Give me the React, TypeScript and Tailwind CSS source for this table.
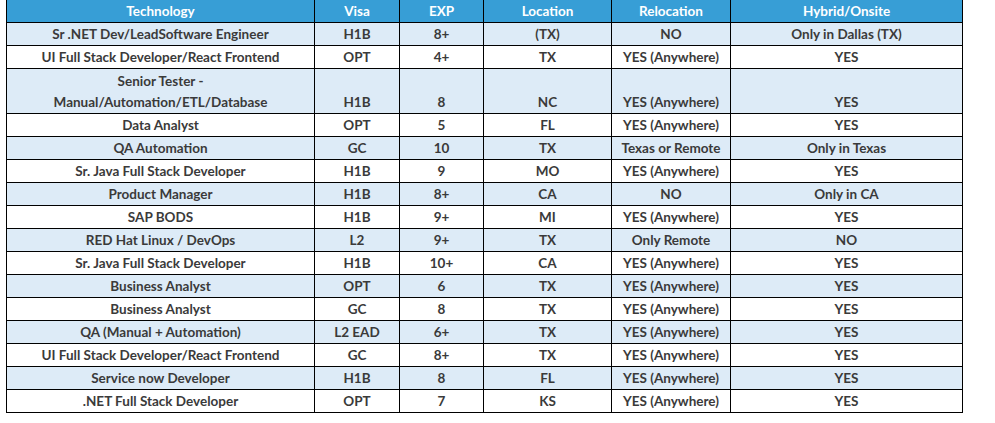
const rows: [string, string, string, string, string, string][] = [
  ["Sr .NET Dev/LeadSoftware Engineer", "H1B", "8+", "(TX)", "NO", "Only in Dallas (TX)"],
  ["UI Full Stack Developer/React Frontend", "OPT", "4+", "TX", "YES (Anywhere)", "YES"],
  ["Senior Tester -\nManual/Automation/ETL/Database", "H1B", "8", "NC", "YES (Anywhere)", "YES"],
  ["Data Analyst", "OPT", "5", "FL", "YES (Anywhere)", "YES"],
  ["QA Automation", "GC", "10", "TX", "Texas or Remote", "Only in Texas"],
  ["Sr. Java Full Stack Developer", "H1B", "9", "MO", "YES (Anywhere)", "YES"],
  ["Product Manager", "H1B", "8+", "CA", "NO", "Only in CA"],
  ["SAP BODS", "H1B", "9+", "MI", "YES (Anywhere)", "YES"],
  ["RED Hat Linux / DevOps", "L2", "9+", "TX", "Only Remote", "NO"],
  ["Sr. Java Full Stack Developer", "H1B", "10+", "CA", "YES (Anywhere)", "YES"],
  ["Business Analyst", "OPT", "6", "TX", "YES (Anywhere)", "YES"],
  ["Business Analyst", "GC", "8", "TX", "YES (Anywhere)", "YES"],
  ["QA (Manual + Automation)", "L2 EAD", "6+", "TX", "YES (Anywhere)", "YES"],
  ["UI Full Stack Developer/React Frontend", "GC", "8+", "TX", "YES (Anywhere)", "YES"],
  ["Service now Developer", "H1B", "8", "FL", "YES (Anywhere)", "YES"],
  [".NET Full Stack Developer", "OPT", "7", "KS", "YES (Anywhere)", "YES"],
];

const headers = ["Technology", "Visa", "EXP", "Location", "Relocation", "Hybrid/Onsite"];

export default function App() {
  return (
    <div className="min-h-screen w-full bg-white pl-[6px] font-['Lato',sans-serif] text-[13.5px] font-bold">
      <table className="w-[956px] table-fixed border-collapse text-center">
        <colgroup>
          <col className="w-[308px]" />
          <col className="w-[85px]" />
          <col className="w-[84px]" />
          <col className="w-[128px]" />
          <col className="w-[119px]" />
          <col className="w-[232px]" />
        </colgroup>
        <thead>
          <tr className="bg-[#379ed6] text-white">
            {headers.map((h) => (
              <th key={h} className="border-x border-b border-black p-0 leading-[22px] font-bold">
                {h}
              </th>
            ))}
          </tr>
        </thead>
        <tbody className="text-[#3a3a3a]">
          {rows.map((r, i) => {
            const tall = r[0].includes("\n");
            return (
              <tr key={i} className={i % 2 === 0 ? "bg-[#ddebf7]" : "bg-white"}>
                {r.map((c, j) => (
                  <td
                    key={j}
                    className={`whitespace-pre-line border border-black p-0 align-bottom leading-[21px] ${
                      tall ? "pt-[2px]" : "pt-px"
                    }`}
                  >
                    {c}
                  </td>
                ))}
              </tr>
            );
          })}
        </tbody>
      </table>
    </div>
  );
}
